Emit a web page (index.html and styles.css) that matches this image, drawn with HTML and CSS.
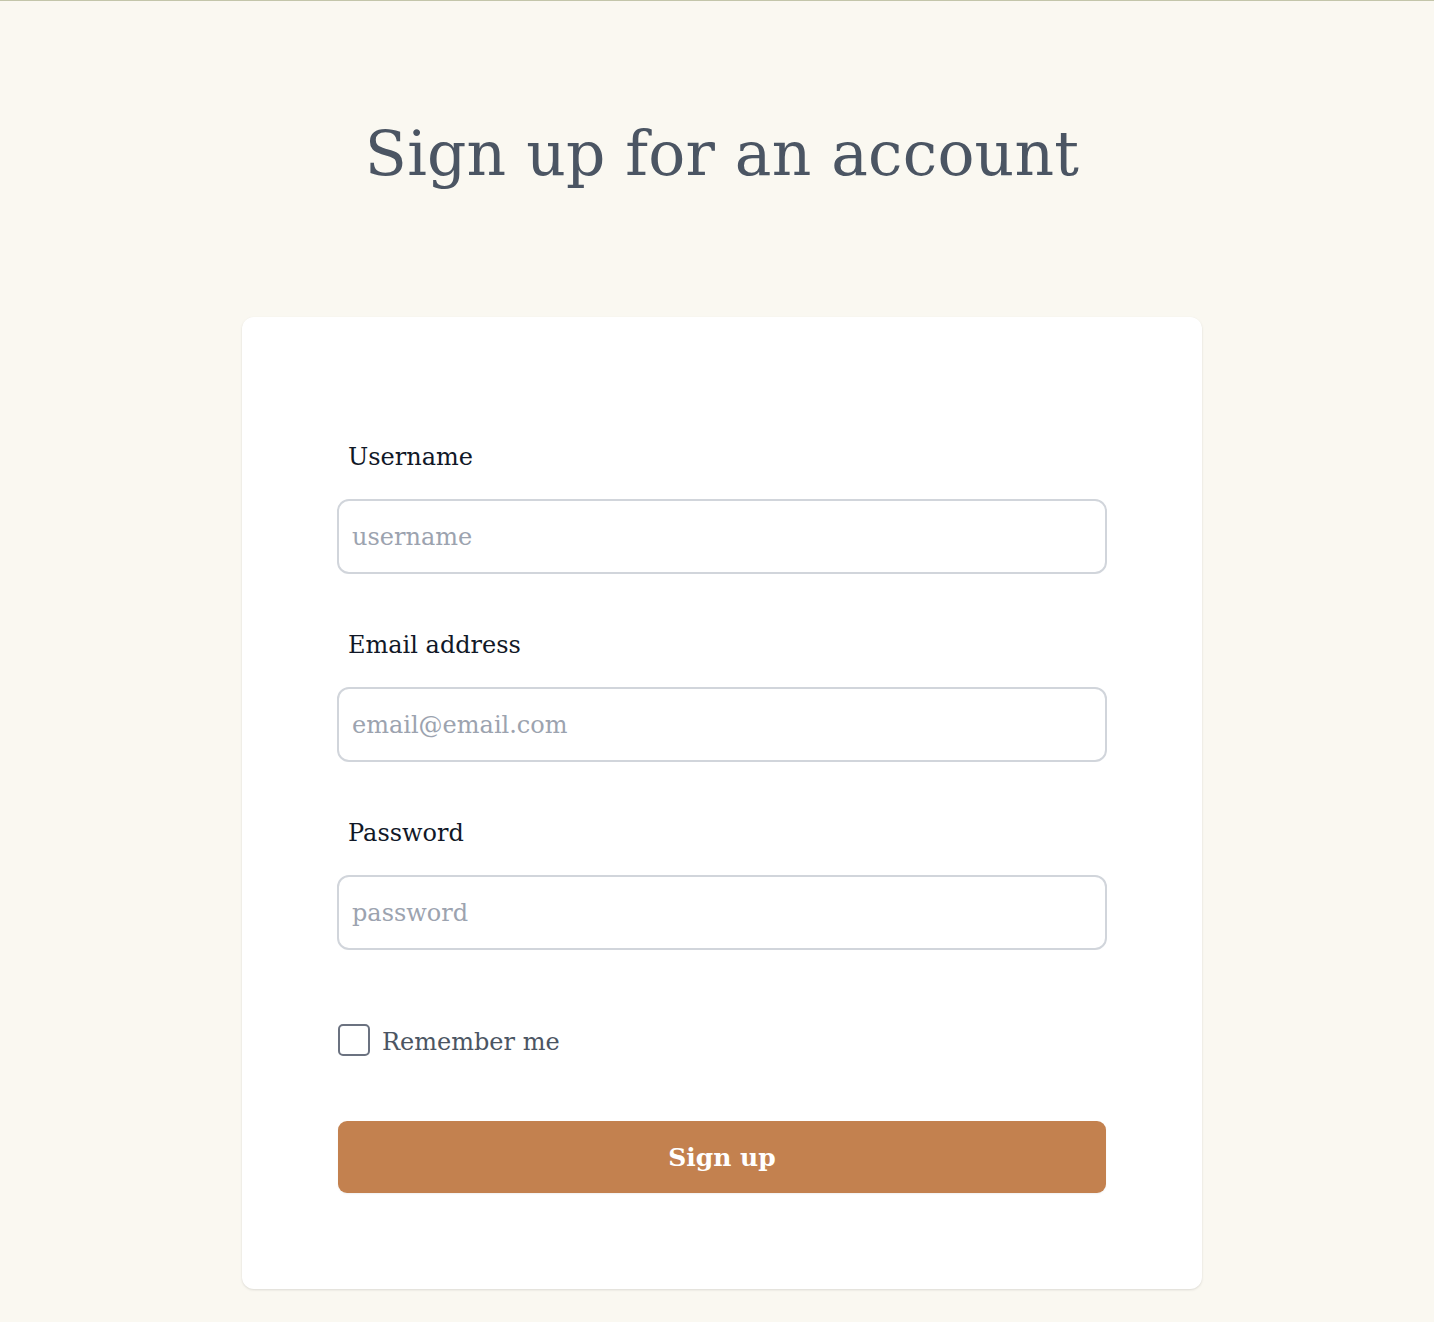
FILE: index.html
```html
<!DOCTYPE html>
<html lang="en">
<head>
<meta charset="utf-8">
<title>Sign up</title>
<link rel="stylesheet" href="styles.css">
</head>
<body>
<div class="page">
  <h1 class="title">Sign up for an account</h1>
  <form class="card">
    <div class="field">
      <label class="label" for="username">Username</label>
      <input class="input" id="username" type="text" placeholder="username">
    </div>
    <div class="field">
      <label class="label" for="email">Email address</label>
      <input class="input" id="email" type="email" placeholder="email@email.com">
    </div>
    <div class="field">
      <label class="label" for="password">Password</label>
      <input class="input" id="password" type="password" placeholder="password">
    </div>
    <label class="remember">
      <span class="checkbox"></span>
      <span class="remember-text">Remember me</span>
    </label>
    <button class="button" type="button">Sign up</button>
  </form>
</div>
</body>
</html>
```

FILE: styles.css
```css
* { box-sizing: border-box; }
html, body { margin: 0; padding: 0; }
body {
  background: #faf8f1;
  border-top: 1px solid #c3c5aa;
  font-family: "DejaVu Serif", "Liberation Serif", serif;
  min-height: 1322px;
}
.page {
  display: flex;
  flex-direction: column;
  align-items: center;
  padding-left: 10px;
}
.title {
  margin: 0;
  padding-top: 113px;
  font-size: 61.5px;
  line-height: 80px;
  font-weight: 400;
  color: #4b5563;
  letter-spacing: 0.2px;
}
.card {
  margin-top: 123px;
  width: 960px;
  background: #fff;
  border-radius: 12px;
  box-shadow: 0 1px 3px rgba(0,0,0,0.08), 0 1px 2px rgba(0,0,0,0.05);
  padding: 120px 95px 96px;
  display: flex;
  flex-direction: column;
}
.field {
  display: flex;
  flex-direction: column;
  margin-bottom: 51px;
}
.label {
  padding-left: 11px;
  font-size: 24px;
  line-height: 40px;
  color: #111827;
  margin-bottom: 22px;
}
.input {
  height: 75px;
  border: 2px solid #d1d5db;
  border-radius: 12px;
  padding: 0 13px;
  font-family: "DejaVu Serif", "Liberation Serif", serif;
  font-size: 24px;
  color: #111827;
  background: #fff;
  outline: none;
}
.input::placeholder { color: #9ca3af; }
.remember {
  display: flex;
  align-items: center;
  gap: 12px;
  margin-top: 17px;
  padding-left: 1px;
}
.checkbox {
  width: 32px;
  height: 32px;
  border: 2px solid #6b7280;
  border-radius: 5px;
  background: #fff;
}
.remember-text {
  font-size: 24px;
  line-height: 40px;
  padding-top: 4px;
  color: #4b5563;
}
.button {
  margin-top: 59px;
  margin-left: 1px;
  margin-right: 1px;
  height: 72px;
  border: none;
  border-radius: 9px;
  background: #c3814f;
  color: #fff;
  font-family: "DejaVu Serif", "Liberation Serif", serif;
  font-size: 25px;
  font-weight: 700;
  box-shadow: 0 1px 2px rgba(0,0,0,0.06);
}
```
